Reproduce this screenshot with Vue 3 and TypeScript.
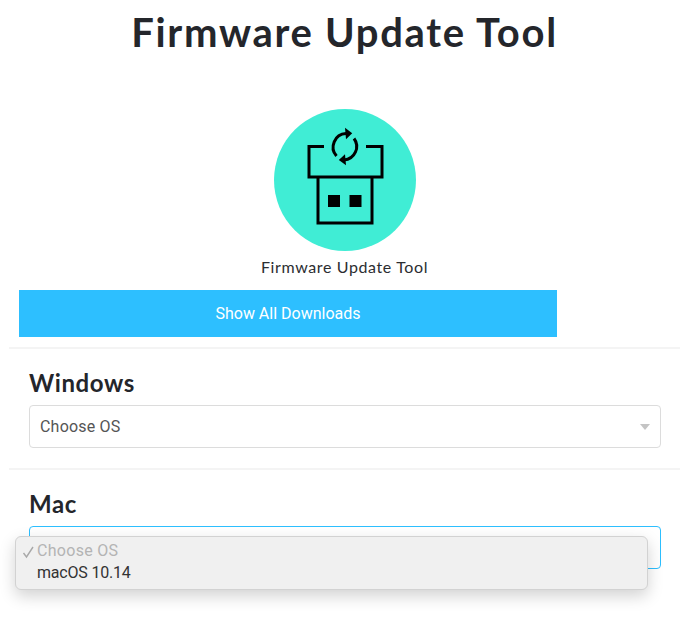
<script setup lang="ts">
const sections = [
  { name: 'Windows', focused: false },
  { name: 'Mac', focused: true },
]
</script>

<template>
  <main class="page">
    <h1 class="title">Firmware Update Tool</h1>
    <div class="product">
      <svg class="logo" width="142" height="142" viewBox="0 0 142 142">
        <circle cx="71" cy="71" r="71" fill="#40edd5" />
        <g fill="none" stroke="#000" stroke-width="3">
          <path d="M50 37.500H35V68H108V37.500H92" />
          <path d="M44 68V114H98V68" />
          <path d="M72 24.600A13.500 13.500 0 0 0 62.500 47" />
          <path d="M80 29.500A13.500 13.500 0 0 1 70 51" />
        </g>
        <path d="M71 18.800L78.200 24.300L72 30.200Z" fill="#000" />
        <path d="M71 45.200L64.800 51L72 56.200Z" fill="#000" />
        <rect x="54" y="86" width="12" height="12" fill="#000" />
        <rect x="75.500" y="86" width="12" height="12" fill="#000" />
      </svg>
      <p class="caption">Firmware Update Tool</p>
    </div>
    <button class="downloads" type="button">Show All Downloads</button>
    <section v-for="s in sections" :key="s.name" class="os">
      <h2 class="os-name">{{ s.name }}</h2>
      <div class="select" :class="{ focused: s.focused }">
        <span>Choose OS</span>
        <i class="arrow"></i>
      </div>
      <div v-if="s.focused" class="menu">
        <div class="opt muted">
          <svg class="check" width="14" height="14" viewBox="0 0 14 14">
            <path d="M1.500 8L4.500 12L11 2" fill="none" stroke="#a8a8a8" stroke-width="1.400" />
          </svg>
          Choose OS
        </div>
        <div class="opt">macOS 10.14</div>
      </div>
    </section>
  </main>
</template>

<style scoped>
.page {
  width: 689px;
  height: 633px;
  overflow: hidden;
  background: #fff;
  box-sizing: border-box;
  font-family: "Roboto", "Liberation Sans", sans-serif;
}
.title {
  margin: 0;
  padding-top: 9px;
  height: 100px;
  box-sizing: border-box;
  text-align: center;
  font: 700 40px/46px "Lato", "Liberation Sans", sans-serif;
  letter-spacing: 1.7px;
  color: #24262b;
}
.product {
  display: flex;
  flex-direction: column;
  align-items: center;
  padding-top: 9px;
}
.logo {
  display: block;
}
.caption {
  margin: 6px 0 0;
  font: 400 16px/20px "Lato", "Liberation Sans", sans-serif;
  letter-spacing: 0.62px;
  color: #2b2d31;
}
.downloads {
  display: block;
  margin: 13px 0 0 19px;
  width: 538px;
  height: 47px;
  border: 0;
  background: #2dbfff;
  color: #fff;
  font: 400 16px "Roboto", "Liberation Sans", sans-serif;
}
.os {
  position: relative;
  margin: 10px 9px 0;
  padding: 20px 19px 20px 20px;
  border-top: 2px solid #f4f4f4;
  height: 121px;
  box-sizing: border-box;
}
.os + .os {
  margin-top: 0;
}
.os-name {
  margin: 0 0 8px;
  font: 700 24px/28px "Lato", "Liberation Sans", sans-serif;
  letter-spacing: 0.6px;
  color: #24262b;
}
.select {
  display: flex;
  align-items: center;
  justify-content: space-between;
  box-sizing: border-box;
  height: 43px;
  padding: 0 10px;
  border: 1px solid #dcdcdc;
  border-radius: 4px;
  color: #555;
  font-size: 16px;
  letter-spacing: 0.2px;
}
.select.focused {
  border-color: #2dbfff;
}
.select.focused span,
.select.focused .arrow {
  visibility: hidden;
}
.arrow {
  width: 0;
  height: 0;
  border-left: 5.500px solid transparent;
  border-right: 5.500px solid transparent;
  border-top: 6px solid #c4c4c4;
}
.menu {
  position: absolute;
  left: 6px;
  top: 66px;
  width: 633px;
  height: 54px;
  box-sizing: border-box;
  padding: 3px 0;
  background: #f0f0f0;
  border: 1px solid #d2d2d2;
  border-radius: 6px;
  box-shadow: 0 6px 16px rgba(0, 0, 0, 0.18);
  font-size: 16px;
}
.opt {
  position: relative;
  height: 22px;
  line-height: 22px;
  padding-left: 21px;
  color: #333;
  letter-spacing: -0.2px;
}
.muted {
  color: #b4b4b4;
  letter-spacing: 0.3px;
}
.check {
  position: absolute;
  left: 6px;
  top: 5px;
}
</style>

<style>
html, body { background: #fff; }
</style>
